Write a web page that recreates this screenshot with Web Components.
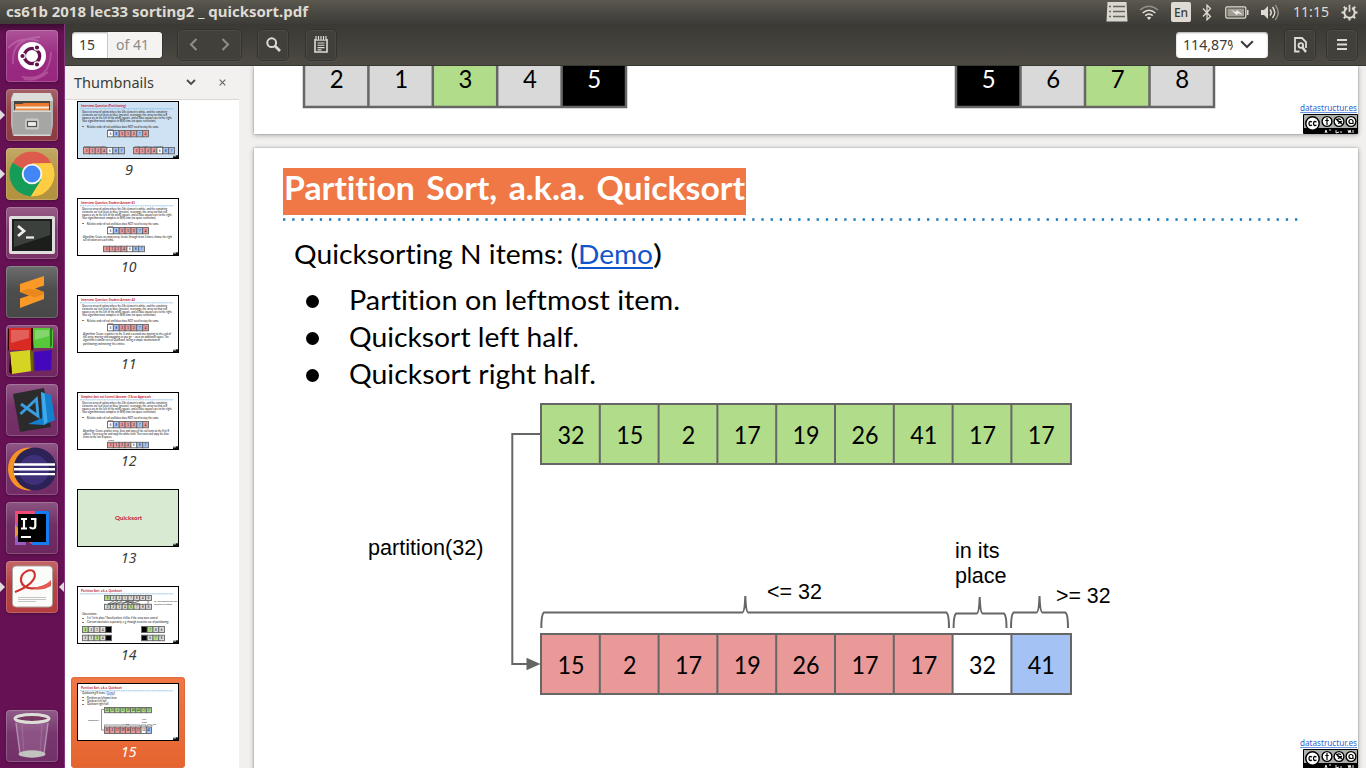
<!DOCTYPE html>
<html lang="en">
<head>
<meta charset="utf-8">
<title>cs61b 2018 lec33 sorting2 _ quicksort.pdf</title>
<style>
html,body{margin:0;padding:0;height:100%;overflow:hidden;background:#f1f0ef;font-variant-ligatures:none}
</style>
</head>
<body>
<desktop-shell></desktop-shell>
<script>
const define = (name, render) => customElements.define(name, class extends HTMLElement {
  constructor(){ super(); this.attachShadow({mode:'open'}); }
  connectedCallback(){ this.shadowRoot.innerHTML = render(this); }
});
const UI = "'Noto Sans','Open Sans',sans-serif";
const SLIDE = "Lato,'Open Sans',sans-serif";
const FILL = {g:'#b1dd8b', r:'#ea9999', b:'#a4c2f4', w:'#ffffff', k:'#000000', s:'#d9d9d9'};

/* One line of text fitted to a given advance width. */
define('fit-text', el => {
  const a = (n, d) => el.getAttribute(n) ?? d;
  const w = a('w'), h = a('h', 24), font = a('face') === 'slide' ? SLIDE : a('face') === 'sans' ? "'Liberation Sans',sans-serif" : UI;
  return `<style>:host{display:block;flex:none;width:${w}px;height:${h}px}svg{display:block;overflow:visible}
    text{font-family:${font};font-size:${a('size',15)}px;font-weight:${a('weight',400)};font-style:${a('slant','normal')};word-spacing:${a('gap',0)}px}</style>
    <svg width="${w}" height="${h}"><text x="0" y="${a('base',17)}" textLength="${w}" lengthAdjust="spacingAndGlyphs" fill="${a('ink','#000')}">${a('text')}</text></svg>`;
});

/* ---------- top panel ---------- */
define('top-panel', () => `<style>
  :host{display:flex;align-items:center;height:24px;background:linear-gradient(#5c5950,#4c4a43 45%,#3e3c38);padding:0 8px 0 6px;box-sizing:border-box;justify-content:space-between}
  .tray{display:flex;align-items:center;height:24px}
  svg{display:block;flex:none}
  .en{width:20px;height:20px;border-radius:2px;background:#dfdbd2;display:flex;align-items:center;justify-content:center;font:500 12px ${UI};color:#3c3b37;margin-left:12px}
  </style>
  <fit-text text="cs61b 2018 lec33 sorting2 _ quicksort.pdf" w="302" size="14.8" weight="700" ink="#dfdbd2"></fit-text>
  <div class="tray">
    <svg width="22" height="20" viewBox="0 0 22 20"><path d="M1.500 0h19l1 19.500h-21z" fill="#dad7cf"/><path d="M3 4.500h2M7 4.500h12M3 9.500h2M7 9.500h12M3 14.500h2M7 14.500h12" stroke="#66645c" stroke-width="1.400"/></svg>
    <svg style="margin-left:11px" width="20" height="17" viewBox="0 0 20 17" fill="none" stroke-width="1.600"><path d="M1 6Q10-1.500 19 6" stroke="#918e85"/><path d="M3.600 9Q10 3.500 16.400 9M6.200 11.700Q10 8.400 13.800 11.700" stroke="#dfdbd2"/><path d="M7.700 13.600Q10 12 12.300 13.600L10 16z" fill="#dfdbd2" stroke="none"/></svg>
    <div class="en">En</div>
    <svg style="margin-left:11px" width="10" height="17" viewBox="0 0 10 17" fill="none" stroke="#dfdbd2" stroke-width="1.300"><path d="M1 4.500l7.500 8L5 15.800V1.200l3.500 3.300-7.500 8"/></svg>
    <svg style="margin-left:13px" width="24" height="13" viewBox="0 0 24 13"><rect x=".8" y=".8" width="20" height="11.400" rx="1.400" fill="none" stroke="#dfdbd2" stroke-width="1.300"/><rect x="2.500" y="2.600" width="16.500" height="7.800" fill="#a19e95"/><path d="M22 4h1.500v5H22z" fill="#dfdbd2"/><path d="M6 4l5 2 1-2 6 5-5-1.800-1 2z" fill="#f1eee7"/></svg>
    <svg style="margin-left:11px" width="20" height="17" viewBox="0 0 20 17" fill="none" stroke-width="1.500"><path d="M1 6h3l4-4v13l-4-4H1z" fill="#dfdbd2"/><path d="M10 5.500q2.500 3 0 6" stroke="#dfdbd2"/><path d="M12.500 3q4.500 5.500 0 11" stroke="#dfdbd2"/><path d="M15.300 1q6 7.500 0 15" stroke="#918e85"/></svg>
    <fit-text style="margin-left:13px" text="11:15" w="36" size="15" ink="#dfdbd2"></fit-text>
    <svg style="margin-left:12px" width="17" height="17" viewBox="0 0 17 17" fill="none" stroke="#dfdbd2"><path d="M6 4A5.200 5.200 0 1 0 11 4" stroke-width="2"/><path d="M8.500 .8v7" stroke-width="1.700"/><path d="M.5 8.500h2.500M14 8.500h2.500M8.500 14v2.500M2.800 2.800l1.800 1.800M14.200 2.800l-1.800 1.800M2.800 14.200l1.800-1.800M14.200 14.200l-1.800-1.800" stroke-width="2"/></svg>
  </div>`);

/* ---------- launcher ---------- */
const tileArt = {
  ubuntu:`<g fill="none" stroke="#e8b7dc" stroke-opacity=".28"><path d="M7 34Q5 8 34 7M16 47Q44 52 45 22M2 18Q14 5 33 11M18 49Q30 52 42 42" stroke-width="1.800"/></g><circle cx="26" cy="26" r="14" fill="#fff"/><circle cx="26" cy="26" r="7.700" fill="none" stroke="#63124e" stroke-width="3.300"/><g stroke="#fff" stroke-width="1.200" fill="#63124e"><circle cx="16.500" cy="26" r="2.700"/><circle cx="31" cy="17.500" r="2.700"/><circle cx="31" cy="34.500" r="2.700"/></g>`,
  files:`<path d="M7.500 4h37L47 9v27l-2 11H7L5 36V9z" fill="#b4b4b2"/><path d="M7.500 4h37L47 12H5z" fill="#dcdcda"/><path d="M8 12h36v12H8z" fill="#484640"/><path d="M9 15h7l2-1h25v8H9z" fill="#e97b2e"/><path d="M10 17.500h33v2.500H10z" fill="#f6ead8"/><path d="M9 19.500h34V22H9z" fill="#f08a3c"/><path d="M7 21.500h38V47H7z" fill="#a6a6a4"/><path d="M7 21.500h38v1.500H7zM8 45.500h36V47H8z" fill="#d8d8d6"/><rect x="19" y="29.500" width="14" height="11" rx="2.500" fill="#c9c9c7"/><rect x="21.500" y="32.500" width="9" height="5" fill="#eee" stroke="#55534f" stroke-width="1.200"/>`,
  chrome:`<circle cx="26" cy="26" r="22.300" fill="#fbc93b"/><path d="M26 26L6.500 15A22.300 22.300 0 0 1 45.500 15.200H26z" fill="#dd5b4c"/><path d="M6.500 14.800A22.300 22.300 0 0 0 25 48.300L35.500 31.500 26 26z" fill="#159c58"/><path d="M45.500 15.200A22.300 22.300 0 0 1 25 48.300L35.500 31.500 34 15.200z" fill="#ffcd41"/><circle cx="26" cy="26" r="10.300" fill="#f4f4f4"/><circle cx="26" cy="26" r="8.400" fill="#4285f4"/>`,
  term:`<rect x="3" y="9" width="46" height="38" rx="2" fill="#dedede"/><rect x="6" y="12" width="40" height="32" fill="#1c1e1c"/><path d="M8 14h36v14L8 40z" fill="#3c403c"/><path d="M12 19l6 5-6 5" fill="none" stroke="#eee" stroke-width="2.700"/><path d="M20 30.500h8" stroke="#eee" stroke-width="2.200"/>`,
  sublime:`<path d="M14 18L38 10v9.500l-9 3 9 3.500v7L14 42v-9.500l9-3-9-3.500z" fill="#f99a28"/><path d="M14 26l9-3.500 15 3.500v2l-9 3.500z" fill="#e8871c"/>`,
  blocks:`<path d="M3 3h22v22H3z" fill="#d92a23"/><path d="M26 3h18l3 2v18H28z" fill="#58c83b"/><path d="M44 3l2-1v19l-2 2z" fill="#247a18"/><path d="M4 27l20-2 2 21-20 3z" fill="#d6d423"/><path d="M24 25l3 2v19l-2 1z" fill="#656507"/><path d="M28 27l18-2-1 20-16 1z" fill="#4308bb"/><path d="M25 3h2v22h-2zM3 3v22l-1 1V4zM4 27l2 22-3-2z" fill="#300"/><path d="M5 5h18v8L5 18zM29 5h14v6l-14 4z" fill="#fff" opacity=".25"/>`,
  code:`<path d="M7 10L38 4l7 39-31 5z" fill="#2b2b2b"/><path d="M35 8l10 3 4 25-11 5-16-1 14-6z" fill="#1480cc"/><path d="M35 8l3.500 1.500 3 28L38 41z" fill="#3fa9ee"/><path d="M15 20l17 12L30.500 15 14.500 30" fill="none" stroke="#3a9de0" stroke-width="2.800"/>`,
  eclipse:`<ellipse cx="22.500" cy="26" rx="20.500" ry="21.500" fill="#f79225"/><circle cx="29" cy="26" r="21.500" fill="#2c2255"/><circle cx="28" cy="27" r="15" fill="#483b8e" opacity=".65"/><path d="M8 21.500h41M8 26.300h41M8 31.100h41" stroke="#fff" stroke-width="2.400"/>`,
  idea:`<path d="M9 9h20L43 24v19H27L9 30z" fill="#ee4c77"/><path d="M29 9h14v34H26z" fill="#157df0"/><path d="M9 22l9-4 2 25H9z" fill="#9a5cc0"/><path d="M9 22l5 8-5 6z" fill="#e39b32"/><rect x="12" y="12" width="28" height="28" fill="#000"/><path d="M15 17h6M18 17v9.500M15 26.500h6M25 17h5.500M29.300 17v7q0 2.500-2.500 2.500-2 0-3-1.500M15 35h10" stroke="#fff" stroke-width="2.200" fill="none"/>`,
  pdf:`<rect x="6.500" y="5" width="40" height="41" rx="3.500" fill="#fbfbfa" stroke="#aaa59d" stroke-width="1"/><path d="M9 31C22 26 32 18 28 11 25 7 14 11 15 20 17 29 31 30 45 22" fill="none" stroke="#cf3330" stroke-width="2.200"/><path d="M27 26.500q11 0 18-7.500v6q-9 5-16 3z" fill="#e35a55"/><path d="M12 36.500h28M12 38.500h28M12 40.500h18" stroke="#c4c4c4" stroke-width="1"/>`,
  trash:`<path d="M9 10l4 34q13 6 26 0l4-34z" fill="#d8b7d3" fill-opacity=".22"/><path d="M10 13l4 30M42 13l-4 30" stroke="#eee" stroke-opacity=".4" stroke-width="1.300"/><path d="M16 14l2 30M36 14l-2 30" stroke="#eee" stroke-opacity=".15" stroke-width="1.300"/><ellipse cx="26" cy="44" rx="13.500" ry="3.700" fill="#c2c2bf"/><ellipse cx="26" cy="8.500" rx="17" ry="4" fill="#763760" stroke="#deded9" stroke-width="3"/>`
};
define('launcher-tile', el => `<style>
  :host{display:block;position:relative;width:52px;height:52px;flex:none;margin-left:6px}
  .t{width:52px;height:52px;box-sizing:border-box;border-radius:4px;background:linear-gradient(#ffffff35,#ffffff08 45%,#ffffff00),${el.getAttribute('tint')};box-shadow:inset 0 0 0 1px #ffffff30,0 1px 3px #0004}
  svg{display:block}
  i{position:absolute;top:21px;border:5px solid transparent;width:0;height:0}
  .l{left:-6px;border-left-color:#dedede;border-right:0}.r{right:-6px;border-right-color:#dedede;border-left:0}
  </style><div class="t"><svg width="52" height="52" viewBox="0 0 52 52">${tileArt[el.getAttribute('art')]}</svg></div>
  ${el.hasAttribute('open')?'<i class="l"></i>':''}${el.hasAttribute('focused')?'<i class="r"></i>':''}`);
define('app-launcher', () => `<style>
  :host{display:flex;flex-direction:column;gap:7px;width:65px;box-sizing:border-box;padding:6px 0;border-right:1px solid #853880;background:linear-gradient(#3c0b33,#651154 9px,#651154)}
  .last{margin-top:auto}</style>
  <launcher-tile art="ubuntu" tint="#98277f"></launcher-tile>
  <launcher-tile art="files" tint="#8e3a43" open></launcher-tile>
  <launcher-tile art="chrome" tint="#b3933f" open></launcher-tile>
  <launcher-tile art="term" tint="#7c3368"></launcher-tile>
  <launcher-tile art="sublime" tint="#484848"></launcher-tile>
  <launcher-tile art="blocks" tint="#71265f"></launcher-tile>
  <launcher-tile art="code" tint="#732c66"></launcher-tile>
  <launcher-tile art="eclipse" tint="#722b66"></launcher-tile>
  <launcher-tile art="idea" tint="#6c285f"></launcher-tile>
  <launcher-tile art="pdf" tint="#b33d40" open focused></launcher-tile>
  <launcher-tile class="last" art="trash" tint="#73316a"></launcher-tile>`);

/* ---------- toolbar ---------- */
define('tool-button', () => `<style>:host{display:flex;align-items:center;justify-content:center;gap:23px;flex:none;height:32px;width:32px;box-sizing:border-box;border:1px solid #34322e;border-radius:5px;background:#42403b;box-shadow:inset 0 0 0 1px #4c4a43,0 1px 0 #55524a}</style><slot></slot>`);
define('viewer-toolbar', () => `<style>
  :host{display:flex;align-items:center;height:42px;box-sizing:border-box;padding:0 8px 0 7px;background:linear-gradient(#3b3934,#44423c 55%,#4d4a43);border-bottom:1px solid #393731}
  .entry{display:flex;width:90px;height:26px;border-radius:4px;background:#fff;box-shadow:inset 0 1px 2px #aaa,0 0 0 1px #35332f;overflow:hidden;align-items:center;margin-right:15px}
  .page{width:36px;box-sizing:border-box;padding-left:7px;border-right:1px solid #cbc8c4;height:26px}
  .total{flex:1;padding-left:8px;height:26px;background:#f4f3f2}
  .nav{width:65px;margin-right:15px}.find{margin-right:16px}
  .zoom{margin-left:auto;width:92px;height:26px;background:#fff;border-radius:4px;display:flex;align-items:center;box-sizing:border-box;padding-left:7px;margin-right:16px;box-shadow:inset 0 1px 2px #aaa}
  .props{margin-right:10px}
  svg{display:block;flex:none}
  </style>
  <div class="entry"><div class="page"><fit-text text="15" w="16" size="14.500" h="26" base="18" ink="#3c3b37"></fit-text></div><div class="total"><fit-text text="of 41" w="33" size="14.500" h="26" base="18" ink="#8d8b87"></fit-text></div></div>
  <tool-button class="nav"><svg width="9" height="13" viewBox="0 0 9 13" fill="none" stroke="#918e85" stroke-width="2"><path d="M7.500 1L2 6.500 7.500 12"/></svg><svg width="9" height="13" viewBox="0 0 9 13" fill="none" stroke="#918e85" stroke-width="2"><path d="M1.500 1L7 6.500 1.500 12"/></svg></tool-button>
  <tool-button class="find"><svg width="15" height="15" viewBox="0 0 15 15" fill="none" stroke="#dfdbd2"><circle cx="5.700" cy="5.700" r="4.400" stroke-width="2"/><path d="M9 9l5 5" stroke-width="2.600"/></svg></tool-button>
  <tool-button><svg width="14" height="17" viewBox="0 0 14 17" fill="none" stroke="#dfdbd2"><path d="M1 3v13h12V3" stroke-width="1.600"/><path d="M1.500 4.200h11" stroke-width="1"/><path d="M2 0v4M4.500 0v4M7 0v4M9.500 0v4M12 0v4" stroke-width="1.200"/><path d="M3.500 7h7M3.500 9.300h7M3.500 11.600h7M3.500 13.900h4" stroke-width="1.100"/></svg></tool-button>
  <div class="zoom"><fit-text text="114,87%" w="56" size="14.500" h="26" base="18" ink="#3c3b37" style="width:50px;overflow:hidden"></fit-text><svg style="margin-left:7px;margin-top:-1px" width="14" height="9" viewBox="0 0 14 9"><path d="M1.200 1.200l5.800 5.800 5.800-5.800" fill="none" stroke="#3c3b37" stroke-width="2"/></svg></div>
  <tool-button class="props"><svg width="13" height="16" viewBox="0 0 13 16" fill="none" stroke="#dfdbd2"><path d="M5.500 14.500H1V1h7l4 4v6" stroke-width="1.800"/><circle cx="6.800" cy="8.500" r="2.300" stroke-width="1.800"/><path d="M8.500 10.500l3.500 4.500" stroke-width="2.400"/></svg></tool-button>
  <tool-button><svg width="10" height="11" viewBox="0 0 10 11"><path d="M0 1h10M0 5.500h10M0 10h10" stroke="#dfdbd2" stroke-width="2"/></svg></tool-button>`);

/* ---------- thumbnails ---------- */
const T = (t,x,y,w,s=3.1,c='#111',b='400') => `<text x="${x}" y="${y}" textLength="${w}" lengthAdjust="spacingAndGlyphs" font-size="${s}" fill="${c}" font-weight="${b}">${t}</text>`;
const miniRow = (x,y,w,h,cols,nums) => { const n=cols.length, p=w/n; return [...cols].map((c,i)=>`<rect x="${x+i*p}" y="${y}" width="${p}" height="${h}" fill="${FILL[c]}" stroke="#666" stroke-width=".9"/><text x="${x+(i+.5)*p}" y="${y+h/2+1}" font-size="2.700" text-anchor="middle">${nums[i]??''}</text>`).join(''); };
const head = (t,w) => T(t,4,6.200,w,3.100,'#be1432','700')+'<path d="M3 7.800h93" stroke="#76b5df" stroke-width=".7" stroke-dasharray="2 .4"/>';
const N0=[6,8,3,1,2,7,4], N1=[3,1,2,4,6,8,7];
const question = T('Given an array of colors where the 0th element is white, and the remaining',5,11.600,85)+T('elements are red (less) or blue (greater), rearrange the array so that red',5,15.200,85)+T('squares are to the left of the white square, and all blue squares are to the right.',5,18.400,90)+T('Your algorithm must complete in Θ(N) time (no space restriction).',5,21.400,74)
  +T('●',5,26.300,2,2)+T('Relative order of red and blues does NOT need to stay the same.',10,26.500,72)+T('Input',31,29,5,2.200)+miniRow(30.500,29.500,41,6.300,'wbrrrbr',N0);
const thumbs = {
  9: ['#cfe2f3', head('Interview Question (Partitioning)',45)+question+T('Example of a valid output',7,46,22,2.200)+T('Another example of a valid output',57,46,29,2.200)+miniRow(6.500,46.500,41,6.300,'rrrrwbb',N1)+miniRow(56.500,46.500,41,6.300,'rrrrwbb',N1)],
  10:['#fff', head('Interview Question, Student Answer #1',54)+question+T('Algorithm: Create an empty array. Iterate through items 3 times, choose the right',6,39.800,89)+T('set of colors on each time.',6,43,31)+miniRow(26.500,48.200,41,5.500,'rrrrwbb',N1)],
  11:['#fff', head('Interview Question, Student Answer #2',54)+question+T('Algorithm: Create a pointer to the 0 and a second one moving to the end of',6,39.800,88)+T('the array, moving and swapping as you go -- uses no additional space! The',6,43,86)+T('algorithm is similar to real Quicksort, being a simple mechanism of',6,46.200,77)+T('partitioning and moving the entries.',6,50,42)],
  12:['#fff', head('Simplest (but not fastest) Answer: 3 Scan Approach',70)+question+T('Algorithm: Create another array. Scan and copy all the red items to the first R',6,39.800,86)+T('spaces. Then scan for and copy the white item. Then scan and copy the blue',6,43,86)+T('items to the last B spaces.',6,46,29)+T('Output',31,49,6,2.200)+miniRow(30.500,50.300,41,5.500,'rrrrwbb',N1)],
  13:['#d9ead3', T('Quicksort',38,31,27,6,'#be1432','700')],
  14:['#fff', head('Partition Sort, a.k.a. Quicksort',41)+miniRow(27.500,9.500,47,5,'gsssssss',[5,3,2,1,7,8,4,6])+miniRow(27.500,18.300,47,5,'ssssgsss',[3,2,1,4,5,7,8,6])+'<path d="M31 18l6-3M35 18l6-3M39 18l6-3M52 15l-7 3M57 15l-7 3M62 15l-8 3M48 15l15 3M71 15v3M31 18l24-2" stroke="#333" stroke-width=".6"/>'+T('Q: How would we use this',77,16,23,2.400)+T('operation for sorting?',77,18.500,18,2.400)
    +T('Observations:',5,29,15,3)+T('●',5,32.700,2,2)+T('5 is “in its place.” Exactly where it’d be if the array were sorted.',10,33,71,3)+T('●',5,36.700,2,2)+T('Can sort two halves separately, e.g. through recursive use of partitioning.',10,37,82,3)
    +miniRow(5.500,40.500,29,6,'gsssk',[3,2,1,4,''])+miniRow(5.500,49.200,29,5.500,'ssgsk',[2,1,3,4,''])+miniRow(64.500,40.500,23,6,'kgss',['',7,8,6])+miniRow(64.500,49.200,23,5.500,'ksgs',['',6,7,8])],
  15:['#fff', head('Partition Sort, a.k.a. Quicksort',41)+T('Quicksorting N items: (',5,11.200,24.500)+T('Demo',30,11.200,6.700,3.100,'#1155cc')+T(')',37,11.200,1)+'<path d="M30 11.700h7" stroke="#15c" stroke-width=".5"/>'+T('●',5,15.300,2,2)+T('Partition on leftmost item.',10,15.700,30)+T('●',5,18.400,2,2)+T('Quicksort left half.',10,18.800,20)+T('●',5,21.600,2,2)+T('Quicksort right half.',10,22,22)
    +miniRow(27.500,24.500,47,5.200,'ggggggggg',[32,15,2,17,19,26,41,17,17])+miniRow(27.500,44,47,6.500,'rrrrrrrwb',[15,2,17,19,26,17,17,32,41])+'<path d="M27 26.500h-2.500v20.500H27M27.500 43.500v-1.500H63v1.500M64 43.500v-1.500h5v1.500M70 43.500v-1.500h5v1.500" fill="none" stroke="#666" stroke-width=".7"/>'+T('partition(32)',11,37.800,11,2.200)+T('&lt;= 32',45,41.800,7,2.200)+T('in its',65,37.300,4,2.200)+T('place',65,39.700,5,2.200)+T('&gt;= 32',72,41.800,7,2.200)]
};
define('page-thumb', el => { const n=el.getAttribute('page'), sel=el.hasAttribute('selected'), [bg,art]=thumbs[n]; return `<style>
  :host{display:flex;flex-direction:column;align-items:center;flex:none;box-sizing:border-box;width:114px;height:91px;padding-top:6px;border-radius:4px;${sel?'background:linear-gradient(#f07746,#e5642f);box-shadow:inset 0 0 0 1px #dd6b3b':''}}
  svg{display:block;font-family:${SLIDE}} fit-text{margin-left:2px}</style>
  <svg width="102" height="58" viewBox="0 0 102 58"><rect width="102" height="58" fill="${bg}"/>${art}<path d="M96 54.300h6V58h-6z" fill="#111"/><path d="M96 54h3v1.500h-3z" fill="#a4c2d4"/><rect x=".5" y=".5" width="101" height="57" fill="none" stroke="#000"/></svg>
  <fit-text text="${n}" w="${n<10?8:15.500}" size="14" slant="italic" h="22" base="16" ink="${sel?'#fff':'#3c3b37'}"></fit-text>`; });
define('thumb-sidebar', () => `<style>
  :host{display:flex;flex-direction:column;width:174px;flex:none;background:#fff;overflow:hidden}
  header{display:flex;align-items:center;height:34px;flex:none;box-sizing:border-box;background:#f2f1f0;border-bottom:1px solid #dad7d4;padding-left:9px}
  .list{display:flex;flex-direction:column;gap:6px;margin-top:-5px;padding-left:6px}
  .clip{flex:1;overflow:hidden}svg{display:block;flex:none}</style>
  <header><fit-text text="Thumbnails" w="80" size="15.300" h="26" base="18" ink="#3c3b37"></fit-text>
  <svg style="margin-left:32px" width="10" height="7" viewBox="0 0 10 7"><path d="M1 1l4 4 4-4" fill="none" stroke="#4c4a46" stroke-width="1.800"/></svg>
  <svg style="margin-left:23px;margin-top:-1px" width="7" height="7" viewBox="0 0 7 7"><path d="M.7 .7l5.600 5.600M6.300 .7L.7 6.300" stroke="#6a6864" stroke-width="1.200"/></svg></header>
  <div class="clip"><div class="list">${[9,10,11,12,13,14].map(n=>`<page-thumb page="${n}"></page-thumb>`).join('')}<page-thumb page="15" selected></page-thumb></div></div>`);

/* ---------- slides ---------- */
define('array-row', el => { const cols=el.getAttribute('fills'), vals=el.getAttribute('values').split(','), w=+el.getAttribute('w'), h=+el.getAttribute('h'), b=el.getAttribute('line'); const y=+el.getAttribute('base'), s=+el.getAttribute('size'), p=+el.getAttribute('pitch')||w/vals.length;
  const cw = i => i === vals.length-1 ? w-i*p : p;
  return `<style>:host{display:block;width:${w}px;height:${h}px}svg{display:block;overflow:visible;font-family:${SLIDE};font-size:${s}px}</style>
  <svg width="${w}" height="${h}">${vals.map((v,i)=>`<rect x="${i*p}" width="${cw(i)}" height="${h}" fill="${FILL[cols[i]]}"/>`).join('')}
  <path d="M0 0H${w}V${h}H0Z${vals.map((_,i)=>i?`M${i*p} 0V${h}`:'').join('')}" stroke="#666" stroke-width="${b}" fill="none"/>
  ${vals.map((v,i)=>`<text x="${(i+.5)*p+.5}" y="${y}" text-anchor="middle" textLength="${v.length*s*.545}" lengthAdjust="spacingAndGlyphs" fill="${cols[i]==='k'?'#fff':'#000'}">${v}</text>`).join('')}</svg>`; });
define('slide-credit', () => `<style>:host{display:flex;flex-direction:column;align-items:flex-end;width:60px}svg{display:block}fit-text{margin-right:1px;border-bottom:1px solid #6b95de}</style>
  <fit-text text="datastructur.es" w="57" size="8" face="ui" h="8" base="6.500" ink="#2a66d2"></fit-text>
  <svg style="margin-top:1px" width="55" height="20" viewBox="0 0 55 20"><rect width="55" height="20" rx="1" fill="#000"/><path d="M1 1h53v13H1z" fill="#abb1aa"/><circle cx="9.500" cy="9.500" r="6.700" fill="#fff" stroke="#000" stroke-width="1.500"/><path d="M9 8q-3-1.500-3 1.500t3 1.500M13.500 8q-3-1.500-3 1.500t3 1.500" fill="none" stroke="#000" stroke-width="1.300"/>
  <g fill="#fff" stroke="#000" stroke-width="1.400"><circle cx="24" cy="7.500" r="4.900"/><circle cx="36" cy="7.500" r="4.900"/><circle cx="48" cy="7.500" r="4.900"/></g><path d="M24 4v7M22.300 6.500h3.400M38 5.500q-3.500-1.500-3.500.5t3 1.500-2.500 2M33 5l6 5M50 7.500a2 2 0 1 0-2 2h2z" fill="none" stroke="#000" stroke-width="1.200"/><path d="M22 19l1-3 1 3M26 16h2M33 16v3l3-1M38 17v2M45 16l1 3 1-3 1 3M50 16v3" stroke="#fff" stroke-width=".9" fill="none"/></svg>`);
define('slide-page', () => `<style>:host{display:flex;flex-direction:column;background:#fff;width:1104px;flex:none;box-shadow:0 1px 5px #0005,0 0 1px #0006;box-sizing:border-box;position:relative}</style><slot></slot>`);
define('bullet-line', el => `<style>:host{display:flex;align-items:center;height:37px;padding-left:51.500px}i{width:13px;height:13px;border-radius:50%;background:#000;margin-right:30.500px;margin-top:1.500px}</style><i></i><fit-text text="${el.getAttribute('text')}" w="${el.getAttribute('w')}" face="slide" size="27.300" h="37" base="27.500"></fit-text>`);
const L=(t,x,y,w)=>`<text x="${x}" y="${y}" textLength="${w}" lengthAdjust="spacingAndGlyphs">${t}</text>`;
const brace=(a,m,b,top,sh)=>`M${a} 628Q${a} ${sh+2} ${a+2.500} ${sh}H${m-3}Q${m-.7} ${sh} ${m} ${top}Q${m+.7} ${sh} ${m+3} ${sh}H${b-2.500}Q${b} ${sh+2} ${b} 628`;
define('partition-figure', () => `<style>:host{display:block;position:relative;width:1104px;height:330px}svg{display:block;font:21.500px 'Liberation Sans',sans-serif}array-row{position:absolute;left:287px}.a{top:10px}.b{top:240px}</style>
  <svg width="1104" height="330" viewBox="254 394 1104 330"><path d="M541 434H512.300V664H528" fill="none" stroke="#666" stroke-width="2"/><path d="M526.500 657.700L540.500 664l-14 6.300z" fill="#666"/>
  <path d="${brace(541.3,745.3,949,596,612.5)}${brace(953.6,979.7,1006.5,597,613.5)}${brace(1011,1039.5,1068,596,612.5)}" fill="none" stroke="#666" stroke-width="2"/>
  ${L('partition(32)',368,555,115.500)}${L('&lt;= 32',767,598.500,55)}${L('in its',955,558,44.500)}${L('place',955,583,51.500)}${L('&gt;= 32',1056,602.500,54.500)}</svg>
  <array-row class="a" fills="ggggggggg" values="32,15,2,17,19,26,41,17,17" w="530" pitch="58.800" h="60" line="2" base="40.300" size="24.800"></array-row>
  <array-row class="b" fills="rrrrrrrwb" values="15,2,17,19,26,17,17,32,41" w="530" pitch="58.800" h="60" line="2" base="40" size="24.800"></array-row>`);
define('document-view', () => `<style>
  :host{display:flex;flex-direction:column;flex:1;gap:14px;background:#f1f0ef;overflow:hidden;padding-left:15px}
  .prev{height:68px;overflow:visible}.cur{height:640px}
  .rows{display:flex;justify-content:space-between;padding:0 144px 0 50px;height:41px;overflow:hidden;flex:none;width:910px;padding-bottom:2px}
  .rows array-row{margin-top:-23px}
  slide-credit.p{margin-left:auto;margin-top:-5px}
  .title{margin:20px 0 0 29px;width:463px;height:47px;background:#f07746;padding-left:1px;box-sizing:border-box}
  .dots{display:block;margin:2.500px 0 0 29px}
  .lead{display:flex;height:37px;margin:16px 0 0 40px}
  .demo{border-bottom:2.400px solid #1155cc;height:30px!important}
  .bul{margin-top:8.500px}
  partition-figure{margin-top:1px}
  </style>
  <slide-page class="prev"><div class="rows"><array-row fills="ssgsk" values="2,1,3,4,5" w="322" h="64" line="2.500" base="44.800" size="25.500"></array-row><array-row style="margin-left:auto" fills="ksgs" values="5,6,7,8" w="258" h="64" line="2.500" base="44.800" size="25.500"></array-row></div><slide-credit class="p"></slide-credit></slide-page>
  <slide-page class="cur">
    <div class="title"><fit-text text="Partition Sort, a.k.a. Quicksort" w="461" face="slide" size="31.700" weight="700" gap="3" h="47" base="32.300" ink="#fff"></fit-text></div>
    <svg class="dots" width="1018" height="3"><path d="M0 1.500h1018" stroke="#1879bd" stroke-width="2.300" stroke-dasharray="2.300 6.900"/></svg>
    <div class="lead"><fit-text text="Quicksorting N items: (" w="284" face="slide" size="27.600" h="37" base="27.200"></fit-text><fit-text class="demo" text="Demo" w="75" face="slide" size="27.600" h="37" base="27.200" ink="#1155cc"></fit-text><fit-text text=")" w="9" face="slide" size="27.600" h="37" base="27.200"></fit-text></div>
    <div class="bul"><bullet-line text="Partition on leftmost item." w="331"></bullet-line><bullet-line text="Quicksort left half." w="230"></bullet-line><bullet-line text="Quicksort right half." w="247"></bullet-line></div>
    <partition-figure></partition-figure>
    <slide-credit style="margin-left:auto;margin-top:15px"></slide-credit>
  </slide-page>`);

define('desktop-shell', () => `<style>
  :host{display:flex;flex-direction:column;width:1366px;height:768px;overflow:hidden}
  .body{display:flex;flex:1;min-height:0}.win{display:flex;flex-direction:column;flex:1;min-width:0}.content{display:flex;flex:1;min-height:0}</style>
  <top-panel></top-panel><div class="body"><app-launcher></app-launcher><div class="win"><viewer-toolbar></viewer-toolbar><div class="content"><thumb-sidebar></thumb-sidebar><document-view></document-view></div></div></div>`);
</script>
</body>
</html>
